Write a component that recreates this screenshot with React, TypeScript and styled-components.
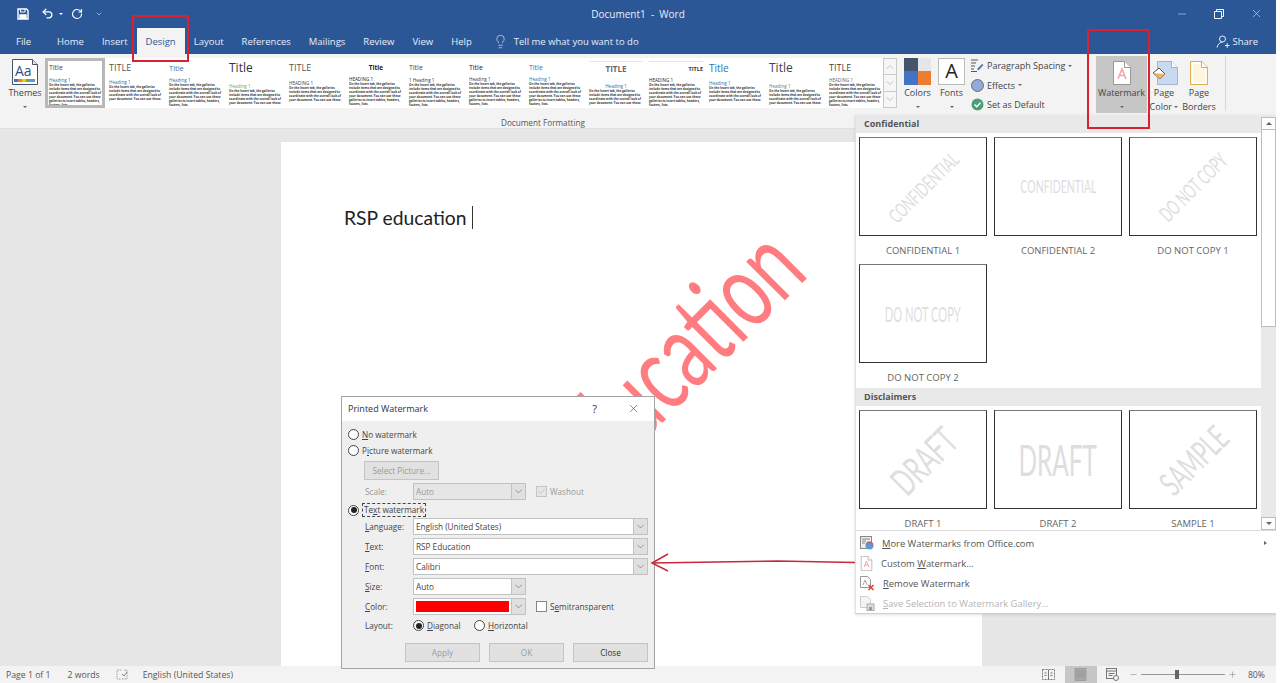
import styled, { createGlobalStyle } from 'styled-components';
import { Lightbulb, Undo2, RotateCw, X, Minus, Plus, ChevronDown, ChevronUp, Check } from 'lucide-react';

const GlobalStyle = createGlobalStyle`
  html, body {
    margin: 0;
    background: #fff;
    font-family: "Open Sans", "Noto Sans", sans-serif;
    color: #444;
  }
  * { box-sizing: border-box; }
`;

const Screen = styled.div`
  position: relative;
  display: flex;
  flex-direction: column;
  width: 1276px;
  height: 683px;
  overflow: hidden;
`;

/* title bar */
const TitleBar = styled.header`
  display: grid;
  grid-template-columns: 1fr auto 1fr;
  align-items: center;
  height: 27px;
  background: #2b5797;
  color: #e8eef7;
  font-size: 10px;
`;

const QuickAccess = styled.div`
  display: flex;
  align-items: center;
  padding-left: 17px;
  color: #fff;
`;

const QuickButton = styled.span<{ $w: number }>`
  display: flex;
  align-items: center;
  width: ${(p) => p.$w}px;
`;

const WindowControls = styled.div`
  display: flex;
  justify-content: flex-end;
  align-items: center;
  gap: 26px;
  padding-right: 13px;
  color: #f2f5fa;
`;

const Caret = styled.span<{ $color?: string }>`
  display: inline-block;
  width: 0;
  height: 0;
  border-left: 2px solid transparent;
  border-right: 2px solid transparent;
  border-top: 2px solid ${(p) => p.$color || '#666'};
  vertical-align: middle;
`;

/* tab row */
const TabBar = styled.nav`
  display: flex;
  align-items: flex-end;
  height: 27px;
  background: #2b5797;
  padding-left: 7px;
`;

const Tab = styled.div<{ $active?: boolean; $first?: boolean }>`
  display: flex;
  align-items: center;
  height: 26px;
  padding: 0 9px;
  margin-right: ${(p) => (p.$first ? '8px' : '0')};
  font-size: 9.5px;
  color: ${(p) => (p.$active ? '#2b5797' : '#e8eef7')};
  background: ${(p) => (p.$active ? '#f3f3f3' : 'transparent')};
`;

const TellMe = styled.div`
  display: flex;
  align-items: center;
  gap: 6px;
  height: 26px;
  margin-left: 12px;
  font-size: 9.5px;
  color: #e8eef7;
`;

const Share = styled.div`
  display: flex;
  align-items: center;
  gap: 2px;
  height: 26px;
  margin-left: auto;
  padding-right: 18px;
  font-size: 9.5px;
  color: #e8eef7;
`;

/* ribbon */
const Ribbon = styled.section`
  display: flex;
  flex-direction: column;
  height: 75px;
  background: #f3f3f3;
  border-bottom: 1px solid #e0e0e0;
`;

const RibbonTools = styled.div`
  display: flex;
  height: 63px;
  padding-top: 2px;
`;

const GroupLabel = styled.div`
  width: 1086px;
  text-align: center;
  font-size: 8.2px;
  line-height: 11px;
  color: #555;
`;

const RibbonButton = styled.div<{ $w: number; $ml?: number; $active?: boolean }>`
  display: flex;
  flex-direction: column;
  align-items: center;
  flex: none;
  width: ${(p) => p.$w}px;
  height: 57px;
  margin-left: ${(p) => p.$ml || 0}px;
  background: ${(p) => (p.$active ? '#c6c6c6' : 'transparent')};
  font-size: 9px;
  line-height: 13.5px;
  color: #444;
  text-align: center;
`;

const ButtonIcon = styled.div`
  display: flex;
  align-items: flex-end;
  justify-content: center;
  height: 29px;
  margin-bottom: 1.5px;
`;

const Gallery = styled.div`
  display: flex;
  flex: none;
  width: 838px;
  height: 50px;
  margin-top: 2px;
  background: #fff;
  overflow: hidden;
`;

const StyleCell = styled.div<{ $selected?: boolean }>`
  flex: none;
  width: 60px;
  height: 50px;
  padding: 3px 2px 0 4px;
  overflow: hidden;
  ${(p) => (p.$selected ? 'border: 3px solid #b8b8b8; padding: 0 1px 0 1px;' : '')}
`;

const CellTitle = styled.div<{ $size: number; $color: string; $align?: string; $bold?: boolean; $rule?: boolean }>`
  height: 14px;
  font-size: ${(p) => p.$size}px;
  line-height: 14px;
  color: ${(p) => p.$color};
  text-align: ${(p) => p.$align || 'left'};
  font-weight: ${(p) => (p.$bold ? 700 : 400)};
  white-space: nowrap;
  ${(p) => (p.$rule ? 'border-top: 1px solid #eee6d8;' : '')}
`;

const CellHeading = styled.div<{ $color: string; $align?: string; $gap: number }>`
  margin-top: ${(p) => p.$gap}px;
  font-size: 4.6px;
  line-height: 6px;
  color: ${(p) => p.$color};
  text-align: ${(p) => p.$align || 'left'};
  white-space: nowrap;
`;

const CellBody = styled.div`
  font-size: 3px;
  line-height: 4px;
  font-weight: 700;
  color: #333;
`;

const GalleryScroll = styled.div`
  display: flex;
  flex-direction: column;
  flex: none;
  width: 14px;
  height: 50px;
  margin-top: 2px;
  border: 1px solid #c9c9c9;
  background: #f6f6f6;
  color: #777;
`;

const ScrollCell = styled.div`
  display: flex;
  flex: 1;
  align-items: center;
  justify-content: center;
  & + & { border-top: 1px solid #c9c9c9; }
`;

const OptionStack = styled.div`
  display: flex;
  flex-direction: column;
  flex: none;
  width: 125px;
  margin-left: 4px;
`;

const OptionRow = styled.div`
  display: flex;
  align-items: center;
  gap: 3px;
  height: 19.5px;
  font-size: 9px;
  color: #444;
  white-space: nowrap;
`;

const GroupSeparator = styled.div`
  flex: none;
  width: 1px;
  height: 55px;
  margin-left: 7px;
  background: #d8d8d8;
`;

const Swatch = styled.div`
  display: grid;
  grid-template-columns: 1fr 1fr;
  grid-template-rows: 1fr 1fr;
  width: 27px;
  height: 27px;
`;

const SwatchPart = styled.div<{ $c: string }>`
  background: ${(p) => p.$c};
`;

const FontBox = styled.div`
  display: flex;
  align-items: center;
  justify-content: center;
  width: 27px;
  height: 27px;
  background: #fff;
  border: 1px solid #bbb;
  font-size: 20px;
  color: #222;
`;

/* document area */
const Canvas = styled.main`
  flex: 1;
  min-height: 0;
  padding: 13px 0 0 281px;
  background: #e6e6e6;
  overflow: hidden;
`;

const Page = styled.article`
  position: relative;
  width: 701px;
  height: 620px;
  padding: 63px 0 0 63px;
  background: #fff;
  overflow: hidden;
`;

const PageText = styled.div`
  display: flex;
  align-items: center;
  height: 24px;
  font-family: Lato, "Open Sans", sans-serif;
  font-size: 19.3px;
  color: #222;
`;

const TextCursor = styled.span`
  width: 1px;
  height: 23px;
  margin-left: 5px;
  background: #333;
`;

const WatermarkText = styled.div`
  position: absolute;
  right: 172px;
  top: 37px;
  font-family: Lato, "Open Sans", sans-serif;
  font-size: 108px;
  line-height: 1;
  color: #ff7c80;
  white-space: nowrap;
  transform-origin: 100% 0.887em;
  transform: rotate(-45deg) scaleX(0.68);
`;

const StatusBar = styled.footer`
  display: flex;
  align-items: center;
  flex: none;
  height: 17px;
  padding-left: 6px;
  background: #f3f3f3;
  font-size: 8.7px;
  color: #555;
`;

const StatusText = styled.span<{ $ml?: number }>`
  display: flex;
  align-items: center;
  margin-left: ${(p) => p.$ml || 0}px;
  white-space: nowrap;
`;

const StatusRight = styled.div`
  display: flex;
  align-items: center;
  height: 17px;
  margin-left: auto;
  padding-right: 11px;
`;

const ViewButton = styled.div<{ $active?: boolean; $w: number; $ml?: number }>`
  display: flex;
  align-items: center;
  justify-content: center;
  width: ${(p) => p.$w}px;
  height: 17px;
  margin-left: ${(p) => p.$ml || 0}px;
  background: ${(p) => (p.$active ? '#c6c6c6' : 'transparent')};
`;

const ZoomSlider = styled.div`
  position: relative;
  width: 84px;
  height: 1px;
  margin: 0 3px;
  background: #999;
`;

const ZoomKnob = styled.span`
  position: absolute;
  left: 34px;
  top: -4px;
  width: 4px;
  height: 9px;
  background: #666;
`;

/* watermark dropdown */
const WatermarkPanel = styled.aside`
  position: absolute;
  left: 855px;
  top: 115px;
  width: 421px;
  background: #fff;
  border-bottom: 1px solid #d0d0d0;
  border-left: 1px solid #e0e0e0;
  box-shadow: 0 1px 3px rgba(0, 0, 0, 0.12);
`;

const PanelBody = styled.div`
  display: flex;
  height: 416px;
  border-bottom: 1px solid #dcdcdc;
`;

const PanelList = styled.div`
  flex: 1;
  overflow: hidden;
`;

const SectionHeader = styled.div`
  height: 18px;
  padding-left: 8px;
  background: #e9e9e9;
  font-size: 9px;
  font-weight: 700;
  line-height: 18px;
  color: #555;
`;

const ThumbGrid = styled.div`
  display: grid;
  grid-template-columns: repeat(3, 128px);
  column-gap: 7px;
  row-gap: 3px;
  padding: 4px 3px 0;
`;

const ThumbItem = styled.div`
  width: 128px;
`;

const Thumb = styled.div`
  display: flex;
  align-items: center;
  justify-content: center;
  height: 99px;
  border: 1px solid #333;
  border-top-color: #777;
  overflow: hidden;
`;

const ThumbWord = styled.span<{ $size: number; $angle: number; $sx: number }>`
  font-family: Lato, "Open Sans", sans-serif;
  font-weight: 400;
  font-size: ${(p) => p.$size}px;
  color: #dedede;
  white-space: nowrap;
  transform: rotate(${(p) => p.$angle}deg) scaleX(${(p) => p.$sx});
`;

const ThumbLabel = styled.div`
  height: 25px;
  padding-top: 8px;
  font-size: 9.5px;
  line-height: 14px;
  text-align: center;
  color: #666;
`;

const PanelScrollbar = styled.div`
  display: flex;
  flex-direction: column;
  flex: none;
  width: 15px;
  padding-top: 2px;
  background: #e9e9e9;
`;

const ScrollArrow = styled.div`
  display: flex;
  align-items: center;
  justify-content: center;
  flex: none;
  height: 13px;
  background: #fdfdfd;
  border: 1px solid #bdbdbd;
`;

const ScrollThumb = styled.div`
  flex: none;
  height: 197px;
  background: #fff;
  border: 1px solid #bdbdbd;
  border-top: none;
`;

const ScrollTrack = styled.div`
  flex: 1;
`;

const ScrollGlyph = styled.span<{ $down?: boolean }>`
  width: 0;
  height: 0;
  border-left: 3px solid transparent;
  border-right: 3px solid transparent;
  ${(p) => (p.$down ? 'border-top: 3px solid #666;' : 'border-bottom: 3px solid #666;')}
`;

const PanelMenu = styled.div`
  padding: 2px 0 0;
  height: 82px;
`;

const MenuItem = styled.div<{ $disabled?: boolean }>`
  display: flex;
  align-items: center;
  gap: 8px;
  height: 20px;
  padding: 0 9px 0 4px;
  font-size: 9.4px;
  color: ${(p) => (p.$disabled ? '#b5b5b5' : '#555')};
`;

const MenuArrow = styled.span`
  margin-left: auto;
  width: 0;
  height: 0;
  border-top: 2.5px solid transparent;
  border-bottom: 2.5px solid transparent;
  border-left: 3px solid #666;
`;

/* printed watermark dialog */
const Dialog = styled.div`
  position: absolute;
  left: 341px;
  top: 396px;
  width: 314px;
  height: 273px;
  background: #efefef;
  border: 1px solid #a3a3a3;
  font-size: 8.2px;
  color: #444;
`;

const DialogTitle = styled.div`
  display: flex;
  align-items: center;
  height: 24px;
  padding: 0 14px 2px 6px;
  background: #fff;
  font-size: 9px;
  color: #333;
`;

const HelpMark = styled.span`
  margin-left: auto;
  margin-right: 30px;
  font-size: 11px;
`;

const DialogBody = styled.div`
  padding: 5px 6px 0;
`;

const RadioRow = styled.label<{ $mt?: number }>`
  display: flex;
  align-items: center;
  gap: 3px;
  height: 16px;
  margin-top: ${(p) => p.$mt || 0}px;
`;

const Radio = styled.span<{ $on?: boolean }>`
  position: relative;
  flex: none;
  width: 11px;
  height: 11px;
  border: 1px solid #444;
  border-radius: 50%;
  background: #fff;
  ${(p) =>
    p.$on
      ? `&::after {
    content: '';
    position: absolute;
    inset: 1.5px;
    border-radius: 50%;
    background: #222;
  }`
      : ''}
`;

const FocusText = styled.span`
  border: 1px dashed #444;
  padding: 0 1px;
  line-height: 12px;
`;

const Key = styled.span`
  text-decoration: underline;
`;

const FakeButton = styled.div<{ $w: number; $ml?: number; $disabled?: boolean }>`
  display: flex;
  align-items: center;
  justify-content: center;
  width: ${(p) => p.$w}px;
  height: 19px;
  margin-left: ${(p) => p.$ml || 0}px;
  background: #e1e1e1;
  border: 1px solid #c4c4c4;
  color: ${(p) => (p.$disabled ? '#9a9a9a' : '#333')};
`;

const SelectRow = styled.div`
  padding-top: 3px;
`;

const FormRow = styled.div<{ $mt?: number; $dim?: boolean }>`
  display: flex;
  align-items: center;
  height: 17px;
  margin-top: ${(p) => p.$mt ?? 3}px;
  padding-left: 17px;
  color: ${(p) => (p.$dim ? '#999' : '#444')};
`;

const FormLabel = styled.span`
  flex: none;
  width: 48px;
`;

const Combo = styled.div<{ $w: number; $dim?: boolean }>`
  display: flex;
  align-items: stretch;
  flex: none;
  width: ${(p) => p.$w}px;
  height: 17px;
  background: ${(p) => (p.$dim ? '#e6e6e6' : '#fff')};
  border: 1px solid #c2c2c2;
`;

const ComboValue = styled.div`
  display: flex;
  flex: 1;
  align-items: center;
  padding: 0 2px;
  overflow: hidden;
  white-space: nowrap;
`;

const ColorFill = styled.div`
  flex: 1;
  margin: 2px;
  background: #ff0000;
`;

const ComboArrow = styled.div`
  display: flex;
  align-items: center;
  justify-content: center;
  flex: none;
  width: 14px;
  background: #e0e0e0;
  border-left: 1px solid #c2c2c2;
  color: #555;
`;

const CheckBox = styled.span`
  display: flex;
  align-items: center;
  justify-content: center;
  flex: none;
  width: 11px;
  height: 11px;
  margin: 0 3px 0 10px;
  background: #fff;
  border: 1px solid #888;
`;

const DimCheckBox = styled(CheckBox)`
  background: #e6e6e6;
  border-color: #c4c4c4;
  color: #aaa;
`;

const LayoutOption = styled.span<{ $w: number }>`
  display: flex;
  align-items: center;
  gap: 3px;
  flex: none;
  width: ${(p) => p.$w}px;
`;

const DialogActions = styled.div`
  display: flex;
  justify-content: flex-end;
  gap: 9px;
  margin-top: 9px;
`;

/* red annotations */
const Callout = styled.div<{ $l: number; $t: number; $w: number; $h: number }>`
  position: absolute;
  left: ${(p) => p.$l}px;
  top: ${(p) => p.$t}px;
  width: ${(p) => p.$w}px;
  height: ${(p) => p.$h}px;
  border: 2px solid #d9222e;
  pointer-events: none;
`;

const ArrowOverlay = styled.svg`
  position: absolute;
  left: 648px;
  top: 548px;
`;

const BODY_TEXT =
  'On the Insert tab, the galleries include items that are designed to coordinate with the overall look of your document. You can use these galleries to insert tables, headers, footers, lists.';
const SHORT_BODY_TEXT =
  'On the Insert tab, the galleries include items that are designed to coordinate with the overall look of your document. You can use these.';

type StyleDef = {
  title: string;
  size: number;
  color: string;
  heading: string;
  headingColor: string;
  gap: number;
  align?: string;
  bold?: boolean;
  rule?: boolean;
  headingAlign?: string;
};

const styleSet: StyleDef[] = [
  { title: 'Title', size: 7, color: '#444', heading: 'Heading 1', headingColor: '#2e74b5', gap: 2 },
  { title: 'TITLE', size: 9, color: '#555', heading: 'Heading 1', headingColor: '#2e74b5', gap: 4 },
  { title: 'Title', size: 7.5, color: '#2e74b5', heading: 'Heading 1', headingColor: '#2e74b5', gap: 2 },
  { title: 'Title', size: 12, color: '#333', heading: 'Heading 1', headingColor: '#70ad47', gap: 8 },
  { title: 'TITLE', size: 9, color: '#555', heading: 'HEADING 1', headingColor: '#444', gap: 5 },
  { title: 'Title', size: 6.5, color: '#222', heading: 'HEADING 1', headingColor: '#222', gap: 1, align: 'center', bold: true },
  { title: 'Title', size: 7, color: '#444', heading: '1   Heading 1', headingColor: '#333', gap: 2 },
  { title: 'Title', size: 7, color: '#222', heading: 'Heading 1', headingColor: '#444', gap: 1 },
  { title: 'Title', size: 7, color: '#2e74b5', heading: 'Heading 1', headingColor: '#2e74b5', gap: 1 },
  { title: 'TITLE', size: 8, color: '#666', heading: 'Heading 1', headingColor: '#3b6ea8', gap: 8, align: 'center', bold: true, rule: true, headingAlign: 'center' },
  { title: 'TITLE', size: 5.5, color: '#333', heading: 'HEADING 1', headingColor: '#222', gap: 2, align: 'right', bold: true, rule: true },
  { title: 'Title', size: 10, color: '#2e74b5', heading: 'Heading 1', headingColor: '#2e74b5', gap: 5 },
  { title: 'Title', size: 12, color: '#444', heading: 'Heading 1', headingColor: '#777', gap: 8 },
  { title: 'TITLE', size: 9, color: '#444', heading: 'HEADING 1', headingColor: '#666', gap: 2 },
];

const tabs = ['Home', 'Insert', 'Design', 'Layout', 'References', 'Mailings', 'Review', 'View', 'Help'];

type Mark = { label: string; word: string; size: number; angle: number; sx: number };

const confidential: Mark[] = [
  { label: 'CONFIDENTIAL 1', word: 'CONFIDENTIAL', size: 20, angle: -45, sx: 0.62 },
  { label: 'CONFIDENTIAL 2', word: 'CONFIDENTIAL', size: 17, angle: 0, sx: 0.62 },
  { label: 'DO NOT COPY 1', word: 'DO NOT COPY', size: 21, angle: -45, sx: 0.6 },
  { label: 'DO NOT COPY 2', word: 'DO NOT COPY', size: 21, angle: 0, sx: 0.53 },
];

const disclaimers: Mark[] = [
  { label: 'DRAFT 1', word: 'DRAFT', size: 38, angle: -45, sx: 0.62 },
  { label: 'DRAFT 2', word: 'DRAFT', size: 42, angle: 0, sx: 0.58 },
  { label: 'SAMPLE 1', word: 'SAMPLE', size: 34, angle: -45, sx: 0.62 },
];

const SaveIcon = () => (
  <svg width="12" height="12" viewBox="0 0 12 12" fill="none" stroke="#fff" strokeWidth="1.4">
    <path d="M1 1h8.5L11 2.5V11H1z" />
    <path d="M3.5 1v3h4.5V1" strokeWidth="1" />
    <path d="M3 11V7h6v4" fill="#fff" />
  </svg>
);

const ThemesIcon = () => (
  <svg width="26" height="26" viewBox="0 0 26 26">
    <path d="M.5.5h20l5 5v20H.5z" fill="#fff" stroke="#44546a" />
    <path d="M20.5.5v5h5" fill="#dfe3ea" stroke="#44546a" />
    <text x="3" y="17" fontFamily="Open Sans, sans-serif" fontSize="14" fill="#2f4f7f">Aa</text>
    <rect x="2" y="20" width="4" height="3" fill="#4472c4" />
    <rect x="6" y="20" width="4" height="3" fill="#ed7d31" />
    <rect x="10" y="20" width="4" height="3" fill="#ffc000" />
    <rect x="14" y="20" width="4" height="3" fill="#70ad47" />
    <rect x="18" y="20" width="5" height="3" fill="#5b9bd5" />
  </svg>
);

const ParagraphIcon = () => (
  <svg width="13" height="13" viewBox="0 0 13 13" fill="none">
    <path d="M0 1h7M0 4h5M0 7h4M0 10h3M0 12.5h6" stroke="#555" />
    <path d="M6 10l5-5 1.5 1-5 5.5z" fill="#3f7fc4" />
  </svg>
);

const EffectsIcon = () => (
  <svg width="13" height="13" viewBox="0 0 13 13">
    <circle cx="6.5" cy="6.5" r="6" fill="#8faadc" stroke="#555" strokeWidth="0.8" />
  </svg>
);

const DefaultIcon = () => (
  <svg width="13" height="13" viewBox="0 0 13 13" fill="none">
    <circle cx="6.5" cy="6.5" r="6" fill="#4d9e78" />
    <path d="M3.5 6.5l2.2 2.2 3.8-4" stroke="#fff" strokeWidth="1.5" />
  </svg>
);

const DocIcon = ({ w, h, tint = '#fff', line = '#999' }: { w: number; h: number; tint?: string; line?: string }) => (
  <svg width={w} height={h} viewBox="0 0 18 24">
    <path d="M.5.5h11l6 6v17H.5z" fill={tint} stroke={line} />
    <path d="M11.5.5v6h6" fill="#fff" stroke={line} />
    <path d="M5 18L9 8l4 10M6.4 14.5h5.2" fill="none" stroke="#f4a9a9" strokeWidth="1.6" />
  </svg>
);

const PageColorIcon = () => (
  <svg width="27" height="24" viewBox="0 0 27 24">
    <path d="M6.5.5h14l6 6v17h-20z" fill="#c9daf0" stroke="#9fb6d3" />
    <path d="M20.5.5v6h6" fill="#fff" stroke="#9fb6d3" />
    <path d="M2 12l6-5 6 6-5 5z" fill="#fff" stroke="#555" />
    <path d="M2 12l12 1-5 5z" fill="#f2b266" />
  </svg>
);

const PageBordersIcon = () => (
  <svg width="18" height="24" viewBox="0 0 18 24">
    <path d="M.5.5h11l6 6v17H.5z" fill="#fff" stroke="#d8b24c" strokeWidth="1.2" />
    <path d="M3 3h8v5h4v13H3z" fill="#fdf6dc" />
    <path d="M11.5.5v6h6" fill="#fff" stroke="#d8b24c" />
  </svg>
);

const ShareIcon = () => (
  <svg width="14" height="13" viewBox="0 0 14 13" fill="none" stroke="#e8eef7">
    <circle cx="6.5" cy="4" r="3" />
    <path d="M1 12.5c.6-3 2.6-5.2 5.5-5.5M9 10.5h4.5M11.2 8.2v4.6" />
  </svg>
);

const MenuGlobe = () => (
  <svg width="14" height="14" viewBox="0 0 14 14">
    <rect x="0.5" y="0.5" width="11" height="12" fill="#eee" stroke="#888" />
    <path d="M2 3h8M2 5h4M2 7h3" stroke="#888" />
    <circle cx="9.5" cy="9.5" r="4" fill="#5b9bd5" />
    <path d="M6.5 8.5a3 3 0 0 1 6 1" stroke="#d9534f" fill="none" />
  </svg>
);

const MenuRemove = () => (
  <svg width="15" height="15" viewBox="0 0 15 15">
    <path d="M.5.5h7l3 3v8h-10z" fill="#fff" stroke="#999" />
    <path d="M3 9l2-5 2 5" fill="none" stroke="#aaa" />
    <path d="M8.5 9l5 5M13.5 9l-5 5" stroke="#d9432f" strokeWidth="1.5" />
  </svg>
);

const MenuSave = () => (
  <svg width="15" height="15" viewBox="0 0 15 15">
    <path d="M.5.5h7l3 3v8h-10z" fill="#f4f4f4" stroke="#ccc" />
    <rect x="7" y="8" width="7" height="6.5" fill="#ddd" stroke="#aaa" />
    <rect x="9" y="11" width="3" height="3" fill="#999" />
  </svg>
);

const ProofIcon = () => (
  <svg width="12" height="11" viewBox="0 0 12 11" fill="none" stroke="#888" strokeWidth="0.8">
    <path d="M5 1H1v9h4M6 10h5V1H8" strokeDasharray="1.5 1" />
    <path d="M6 5l2 2 3-4" stroke="#666" />
  </svg>
);

const ReadIcon = () => (
  <svg width="13" height="11" viewBox="0 0 13 11" fill="none" stroke="#777">
    <path d="M.5.5h12v10H.5z" strokeDasharray="2 1" />
    <path d="M6.5 1v9" />
    <path d="M2.5 4h2M2.5 6.5h2M8.5 4h2M8.5 6.5h2" />
  </svg>
);

const PrintIcon = () => (
  <svg width="13" height="13" viewBox="0 0 13 13" fill="#a9a9a9" stroke="#8d8d8d" strokeWidth="0.6">
    <rect x="1" y="0.5" width="11" height="12" />
    <path d="M2.5 3h8M2.5 5h8M2.5 7h8M2.5 9h8" />
  </svg>
);

const WebIcon = () => (
  <svg width="13" height="13" viewBox="0 0 13 13" fill="none" stroke="#777">
    <rect x="0.5" y="0.5" width="10" height="10" />
    <path d="M0.5 3h10M2.5 5.5h6M2.5 7.5h4" />
    <circle cx="10" cy="10" r="2.5" fill="#f3f3f3" />
  </svg>
);

const ThumbCard = ({ mark }: { mark: Mark }) => (
  <ThumbItem>
    <Thumb>
      <ThumbWord $size={mark.size} $angle={mark.angle} $sx={mark.sx}>
        {mark.word}
      </ThumbWord>
    </Thumb>
    <ThumbLabel>{mark.label}</ThumbLabel>
  </ThumbItem>
);

const ComboDown = () => <ChevronDown size={11} strokeWidth={1.2} />;

const App = () => {
  return (
    <Screen>
      <GlobalStyle />
      <TitleBar>
        <QuickAccess>
          <QuickButton $w={24}>
            <SaveIcon />
          </QuickButton>
          <QuickButton $w={18}>
            <Undo2 size={13} strokeWidth={2.4} />
          </QuickButton>
          <QuickButton $w={12}>
            <Caret $color="#fff" />
          </QuickButton>
          <QuickButton $w={24}>
            <RotateCw size={12} strokeWidth={2.4} />
          </QuickButton>
          <ChevronDown size={8} strokeWidth={1.5} />
        </QuickAccess>
        <div>Document1 &nbsp;-&nbsp; Word</div>
        <WindowControls>
          <Minus size={12} strokeWidth={1} />
          <svg width="10" height="10" viewBox="0 0 10 10" fill="none" stroke="#f2f5fa">
            <path d="M.5 2.5h7v7h-7zM2.5 2.5v-2h7v7h-2" />
          </svg>
          <X size={13} strokeWidth={1} />
        </WindowControls>
      </TitleBar>

      <TabBar>
        <Tab $first>File</Tab>
        {tabs.map((tab) => (
          <Tab key={tab} $active={tab === 'Design'}>
            {tab}
          </Tab>
        ))}
        <TellMe>
          <Lightbulb size={15} strokeWidth={1} />
          Tell me what you want to do
        </TellMe>
        <Share>
          <ShareIcon />
          Share
        </Share>
      </TabBar>

      <Ribbon>
        <RibbonTools>
          <RibbonButton $w={40} $ml={5}>
            <ButtonIcon>
              <ThemesIcon />
            </ButtonIcon>
            Themes
            <div>
              <Caret />
            </div>
          </RibbonButton>
          <Gallery>
            {styleSet.map((item, index) => (
              <StyleCell key={index} $selected={index === 0}>
                <CellTitle $size={item.size} $color={item.color} $align={item.align} $bold={item.bold} $rule={item.rule}>
                  {item.title}
                </CellTitle>
                <CellHeading $color={item.headingColor} $align={item.headingAlign} $gap={item.gap}>
                  {item.heading}
                </CellHeading>
                <CellBody>{item.gap >= 4 ? SHORT_BODY_TEXT : BODY_TEXT}</CellBody>
              </StyleCell>
            ))}
          </Gallery>
          <GalleryScroll>
            <ScrollCell>
              <ChevronUp size={12} strokeWidth={0.8} />
            </ScrollCell>
            <ScrollCell>
              <ChevronDown size={12} strokeWidth={0.8} />
            </ScrollCell>
            <ScrollCell>
              <ChevronDown size={12} strokeWidth={0.8} />
            </ScrollCell>
          </GalleryScroll>
          <RibbonButton $w={37} $ml={2}>
            <ButtonIcon>
              <Swatch>
                <SwatchPart $c="#44546a" />
                <SwatchPart $c="#e7e6e6" />
                <SwatchPart $c="#4472c4" />
                <SwatchPart $c="#ed7d31" />
              </Swatch>
            </ButtonIcon>
            Colors
            <div>
              <Caret />
            </div>
          </RibbonButton>
          <RibbonButton $w={31}>
            <ButtonIcon>
              <FontBox>A</FontBox>
            </ButtonIcon>
            Fonts
            <div>
              <Caret />
            </div>
          </RibbonButton>
          <OptionStack>
            <OptionRow>
              <ParagraphIcon />
              Paragraph Spacing <Caret />
            </OptionRow>
            <OptionRow>
              <EffectsIcon />
              Effects <Caret />
            </OptionRow>
            <OptionRow>
              <DefaultIcon />
              Set as Default
            </OptionRow>
          </OptionStack>
          <RibbonButton $w={51} $active>
            <ButtonIcon>
              <DocIcon w={18} h={24} />
            </ButtonIcon>
            Watermark
            <div>
              <Caret />
            </div>
          </RibbonButton>
          <RibbonButton $w={32} $ml={1}>
            <ButtonIcon>
              <PageColorIcon />
            </ButtonIcon>
            Page
            <div>
              Color <Caret />
            </div>
          </RibbonButton>
          <RibbonButton $w={38}>
            <ButtonIcon>
              <PageBordersIcon />
            </ButtonIcon>
            Page
            <div>Borders</div>
          </RibbonButton>
          <GroupSeparator />
        </RibbonTools>
        <GroupLabel>Document Formatting</GroupLabel>
      </Ribbon>

      <Canvas>
        <Page>
          <WatermarkText>RSP Education</WatermarkText>
          <PageText>
            RSP education
            <TextCursor />
          </PageText>
        </Page>
      </Canvas>

      <StatusBar>
        <StatusText>Page 1 of 1</StatusText>
        <StatusText $ml={17}>2 words</StatusText>
        <StatusText $ml={16}>
          <ProofIcon />
        </StatusText>
        <StatusText $ml={15}>English (United States)</StatusText>
        <StatusRight>
          <ReadIcon />
          <ViewButton $w={32} $active $ml={10}>
            <PrintIcon />
          </ViewButton>
          <ViewButton $w={32}>
            <WebIcon />
          </ViewButton>
          <Minus size={9} strokeWidth={1} />
          <ZoomSlider>
            <ZoomKnob />
          </ZoomSlider>
          <Plus size={9} strokeWidth={1} />
          <StatusText $ml={11}>80%</StatusText>
        </StatusRight>
      </StatusBar>

      <WatermarkPanel>
        <PanelBody>
          <PanelList>
            <SectionHeader>Confidential</SectionHeader>
            <ThumbGrid>
              {confidential.map((mark) => (
                <ThumbCard key={mark.label} mark={mark} />
              ))}
            </ThumbGrid>
            <SectionHeader>Disclaimers</SectionHeader>
            <ThumbGrid>
              {disclaimers.map((mark) => (
                <ThumbCard key={mark.label} mark={mark} />
              ))}
            </ThumbGrid>
          </PanelList>
          <PanelScrollbar>
            <ScrollArrow>
              <ScrollGlyph />
            </ScrollArrow>
            <ScrollThumb />
            <ScrollTrack />
            <ScrollArrow>
              <ScrollGlyph $down />
            </ScrollArrow>
          </PanelScrollbar>
        </PanelBody>
        <PanelMenu>
          <MenuItem>
            <MenuGlobe />
            <span>
              <Key>M</Key>ore Watermarks from Office.com
            </span>
            <MenuArrow />
          </MenuItem>
          <MenuItem>
            <DocIcon w={13} h={15} />
            <span>
              Custom <Key>W</Key>atermark...
            </span>
          </MenuItem>
          <MenuItem>
            <MenuRemove />
            <span>
              <Key>R</Key>emove Watermark
            </span>
          </MenuItem>
          <MenuItem $disabled>
            <MenuSave />
            <span>
              <Key>S</Key>ave Selection to Watermark Gallery...
            </span>
          </MenuItem>
        </PanelMenu>
      </WatermarkPanel>

      <Dialog>
        <DialogTitle>
          Printed Watermark
          <HelpMark>?</HelpMark>
          <X size={13} strokeWidth={1} />
        </DialogTitle>
        <DialogBody>
          <RadioRow>
            <Radio />
            <span>
              <Key>N</Key>o watermark
            </span>
          </RadioRow>
          <RadioRow>
            <Radio />
            <span>
              P<Key>i</Key>cture watermark
            </span>
          </RadioRow>
          <SelectRow>
            <FakeButton $w={75} $ml={16} $disabled>
              Select Picture...
            </FakeButton>
          </SelectRow>
          <FormRow $dim>
            <FormLabel>Scale:</FormLabel>
            <Combo $w={113} $dim>
              <ComboValue>Auto</ComboValue>
              <ComboArrow>
                <ComboDown />
              </ComboArrow>
            </Combo>
            <DimCheckBox>
              <Check size={9} strokeWidth={1.5} />
            </DimCheckBox>
            Washout
          </FormRow>
          <RadioRow $mt={2}>
            <Radio $on />
            <FocusText>
              Te<Key>x</Key>t watermark
            </FocusText>
          </RadioRow>
          <FormRow $mt={0}>
            <FormLabel>
              <Key>L</Key>anguage:
            </FormLabel>
            <Combo $w={235}>
              <ComboValue>English (United States)</ComboValue>
              <ComboArrow>
                <ComboDown />
              </ComboArrow>
            </Combo>
          </FormRow>
          <FormRow>
            <FormLabel>
              <Key>T</Key>ext:
            </FormLabel>
            <Combo $w={235}>
              <ComboValue>RSP Education</ComboValue>
              <ComboArrow>
                <ComboDown />
              </ComboArrow>
            </Combo>
          </FormRow>
          <FormRow>
            <FormLabel>
              <Key>F</Key>ont:
            </FormLabel>
            <Combo $w={235}>
              <ComboValue>Calibri</ComboValue>
              <ComboArrow>
                <ComboDown />
              </ComboArrow>
            </Combo>
          </FormRow>
          <FormRow>
            <FormLabel>
              <Key>S</Key>ize:
            </FormLabel>
            <Combo $w={113}>
              <ComboValue>Auto</ComboValue>
              <ComboArrow>
                <ComboDown />
              </ComboArrow>
            </Combo>
          </FormRow>
          <FormRow>
            <FormLabel>
              <Key>C</Key>olor:
            </FormLabel>
            <Combo $w={113}>
              <ColorFill />
              <ComboArrow>
                <ComboDown />
              </ComboArrow>
            </Combo>
            <CheckBox />
            <span>
              S<Key>e</Key>mitransparent
            </span>
          </FormRow>
          <FormRow $mt={2}>
            <FormLabel>Layout:</FormLabel>
            <LayoutOption $w={61}>
              <Radio $on />
              <span>
                <Key>D</Key>iagonal
              </span>
            </LayoutOption>
            <LayoutOption $w={80}>
              <Radio />
              <span>
                <Key>H</Key>orizontal
              </span>
            </LayoutOption>
          </FormRow>
          <DialogActions>
            <FakeButton $w={75} $disabled>
              Apply
            </FakeButton>
            <FakeButton $w={75} $disabled>
              OK
            </FakeButton>
            <FakeButton $w={75}>Close</FakeButton>
          </DialogActions>
        </DialogBody>
      </Dialog>

      <ArrowOverlay width="210" height="30" viewBox="0 0 210 30" fill="none" stroke="#c8283c" strokeWidth="1.5">
        <path d="M207 14.5L130 13L4 15" />
        <path d="M20 6L4 15L20 23" />
      </ArrowOverlay>

      <Callout $l={132} $t={15} $w={57} $h={47} />
      <Callout $l={1087} $t={29} $w={63} $h={100} />
    </Screen>
  );
};

export default App;
